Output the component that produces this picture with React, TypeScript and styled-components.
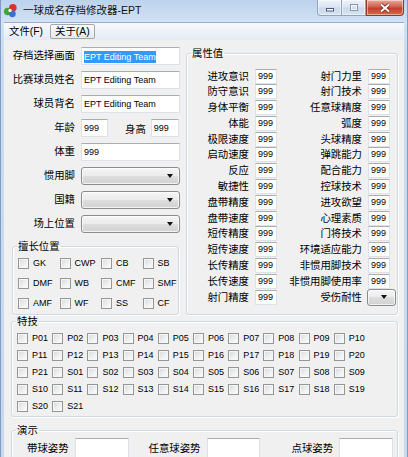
import React from "react"
import styled, { createGlobalStyle } from "styled-components"

const GlobalStyle = createGlobalStyle`
  *, *::before, *::after { box-sizing: border-box; }
  html, body { margin: 0; padding: 0; }
  body {
    width: 408px;
    height: 457px;
    overflow: hidden;
    font-family: "Liberation Sans", "Noto Sans CJK SC", sans-serif;
    color: #000;
  }
`

const Window = styled.div`
  width: 408px;
  height: 457px;
  display: flex;
  flex-direction: column;
  background: linear-gradient(#bcd2ec, #d3e2f4 22px, #c9dbf0 60px, #c6d9ef);
  border-left: 1px solid #7f9cc4;
  border-right: 1px solid #7f9cc4;
  overflow: hidden;
`

const TitleBar = styled.div`
  height: 22px;
  flex: none;
  display: flex;
  align-items: flex-start;
  padding-left: 2px;
`

const AppIcon = styled.svg`
  width: 15px;
  height: 15px;
  margin-top: 3px;
  flex: none;
`

const Title = styled.div`
  margin-left: 5px;
  font-size: 10.5px;
  line-height: 20px;
  color: #111;
  flex: 1;
`

const CaptionButtons = styled.div`
  display: flex;
  margin-right: 3px;
`

const CaptionButton = styled.div<{ $w: number; $close?: boolean; $first?: boolean }>`
  width: ${(p) => p.$w}px;
  height: 16px;
  display: flex;
  align-items: center;
  justify-content: center;
  border: 1px solid ${(p) => (p.$close ? "#8a3a30" : "#8ea4c2")};
  border-top: none;
  border-left: ${(p) => (p.$close || p.$first ? "" : "none")};
  border-radius: ${(p) => (p.$first ? "0 0 0 4px" : p.$close ? "0 0 4px 0" : "0")};
  background: ${(p) =>
    p.$close
      ? "linear-gradient(#e9a99b, #d0604d 45%, #c0402c 55%, #d66a4e)"
      : "linear-gradient(#eef3fa, #dbe5f1 45%, #cbd9ea 55%, #d8e4f2)"};
  box-shadow: inset 0 0 0 1px rgba(255, 255, 255, 0.45);
`

const Frame = styled.div`
  flex: 1;
  display: flex;
  flex-direction: column;
  padding: 0 3px;
  min-height: 0;
`

const MenuBar = styled.div`
  height: 18px;
  flex: none;
  display: flex;
  align-items: center;
  gap: 2px;
  padding-left: 0;
  border-top: 1px solid #97aecd;
  background: linear-gradient(#f7f9fd, #e4ebf5);
`

const MenuItem = styled.div<{ $hot?: boolean }>`
  height: 15px;
  padding: 0 4px;
  font-size: 10.4px;
  line-height: 13px;
  border: 1px solid ${(p) => (p.$hot ? "#a3a7ad" : "transparent")};
  border-radius: 2px;
  background: ${(p) => (p.$hot ? "linear-gradient(#fbfbfb, #e6e8eb)" : "transparent")};
`

const Client = styled.div`
  flex: 1;
  background: #f0f0f0;
  padding: 7px 6px 0 7px;
`

const TopSection = styled.div`
  display: flex;
  gap: 6px;
  height: 268px;
`

const LeftColumn = styled.div`
  width: 169px;
  display: flex;
  flex-direction: column;
`

const Form = styled.div`
  display: grid;
  grid-template-columns: 64px 99px;
  grid-auto-rows: 18px;
  column-gap: 6px;
  row-gap: 6px;
`

const Label = styled.div`
  font-size: 10.4px;
  line-height: 18px;
  text-align: right;
  white-space: nowrap;
`

const TextBox = styled.div<{ $w?: number; $h?: number }>`
  width: ${(p) => (p.$w ? `${p.$w}px` : "100%")};
  height: ${(p) => p.$h ?? 18}px;
  background: #fff;
  border: 1px solid #dde2e8;
  border-top-color: #abadb3;
  font-size: 9px;
  line-height: ${(p) => (p.$h ?? 18) - 2}px;
  padding-left: 2px;
  white-space: nowrap;
  overflow: hidden;
  flex: none;
`

const Selected = styled.span`
  display: inline-block;
  line-height: 12px;
  background: #3399ff;
  color: #fff;
  vertical-align: middle;
`

const InlineRow = styled.div`
  display: flex;
  align-items: center;
`

const InlineLabel = styled.span`
  font-size: 10.4px;
  margin: 0 5px 0 17px;
`

const Combo = styled.div<{ $w?: number; $h?: number }>`
  width: ${(p) => (p.$w ? `${p.$w}px` : "100%")};
  height: ${(p) => p.$h ?? 18}px;
  border: 1px solid #8c8c8c;
  border-radius: 3px;
  background: linear-gradient(#f5f5f5, #ebebeb 50%, #dddddd 50%, #d2d2d2);
  box-shadow: inset 0 0 0 1px rgba(255, 255, 255, 0.7);
  display: flex;
  align-items: center;
  justify-content: flex-end;
  padding-right: 6px;
  flex: none;

  &::after {
    content: "";
    border-left: 3px solid transparent;
    border-right: 3px solid transparent;
    border-top: 4px solid #111;
  }
`

const Group = styled.fieldset<{ $mt?: number }>`
  margin: ${(p) => p.$mt ?? 0}px 0 0 0;
  padding: 0;
  min-width: 0;
  border: 1px solid #cfd9df;
  border-radius: 3px;
  box-shadow: inset 1px 1px 0 #fff, 1px 1px 0 #fff;
`

const Legend = styled.legend`
  margin-left: 4px;
  padding: 0 1px;
  font-size: 10.4px;
  line-height: 13px;
`

const PositionGroup = styled(Group)`
  width: 167px;
  margin-left: 1px;
`

const CheckGrid = styled.div<{ $col: number; $row: number; $cols: number }>`
  display: grid;
  grid-template-columns: repeat(${(p) => p.$cols}, ${(p) => p.$col}px);
  grid-auto-rows: ${(p) => p.$row}px;
`

const PositionChecks = styled(CheckGrid)`
  padding: 0 0 1px 5px;
`

const SkillChecks = styled(CheckGrid)`
  padding: 1.5px 0 1px 5px;
`

const Check = styled.label`
  display: flex;
  align-items: center;
  gap: 4px;
  font-size: 9px;
  white-space: nowrap;
`

const Box = styled.span`
  width: 11px;
  height: 11px;
  flex: none;
  border: 1px solid #959696;
  background: linear-gradient(135deg, #d6d9dd, #f0f1f2 60%, #fcfcfc);
  box-shadow: inset 0 0 0 1px #f6f6f6;
`

const AttrGroup = styled(Group)`
  flex: 1;
`

const AttrGrid = styled.div`
  display: grid;
  grid-template-columns: 57px 22px 79px 22px;
  grid-auto-rows: 15px;
  column-gap: 6px;
  row-gap: 0.8px;
  padding: 8.5px 0 0 5px;
  align-items: center;
`

const AttrLabel = styled.div`
  font-size: 10.4px;
  line-height: 15px;
  text-align: right;
  white-space: nowrap;
`

const InjuryCombo = styled(Combo)`
  margin-left: -1px;
  padding-right: 8px;
`

const DemoRow = styled.div`
  display: flex;
  align-items: center;
  padding: 0.5px 0 0 15px;
`

const DemoLabel = styled.span<{ $ml?: number }>`
  font-size: 10.4px;
  margin: 0 6px 0 ${(p) => p.$ml ?? 0}px;
  white-space: nowrap;
`

const positions = ["GK", "CWP", "CB", "SB", "DMF", "WB", "CMF", "SMF", "AMF", "WF", "SS", "CF"]

const pad = (n: number) => (n < 10 ? "0" + n : "" + n)
const skills = [
  ...Array.from({ length: 21 }, (_, i) => "P" + pad(i + 1)),
  ...Array.from({ length: 21 }, (_, i) => "S" + pad(i + 1)),
]

const attrs: [string, string][] = [
  ["进攻意识", "射门力里"],
  ["防守意识", "射门技术"],
  ["身体平衡", "任意球精度"],
  ["体能", "弧度"],
  ["极限速度", "头球精度"],
  ["启动速度", "弹跳能力"],
  ["反应", "配合能力"],
  ["敏捷性", "控球技术"],
  ["盘带精度", "进攻欲望"],
  ["盘带速度", "心理素质"],
  ["短传精度", "门将技术"],
  ["短传速度", "环境适应能力"],
  ["长传精度", "非惯用脚技术"],
  ["长传速度", "非惯用脚使用率"],
  ["射门精度", "受伤耐性"],
]

const CheckItem = ({ text }: { text: string }) => (
  <Check>
    <Box />
    {text}
  </Check>
)

export default function App() {
  return (
    <>
      <GlobalStyle />
      <Window>
        <TitleBar>
          <AppIcon viewBox="0 0 16 16">
            <circle cx="5" cy="9" r="4" fill="#3fa53a" />
            <circle cx="10.5" cy="5" r="4" fill="#d8332c" />
            <circle cx="10" cy="11.5" r="3.6" fill="#3a6fd0" />
            <circle cx="7.5" cy="8" r="1.8" fill="#f2f2f2" />
          </AppIcon>
          <Title>一球成名存档修改器-EPT</Title>
          <CaptionButtons>
            <CaptionButton $w={25} $first>
              <svg width="10" height="8" viewBox="0 0 10 8">
                <rect x="1.5" y="4.5" width="7" height="2.5" fill="#fff" stroke="#4a5d78" />
              </svg>
            </CaptionButton>
            <CaptionButton $w={24}>
              <svg width="10" height="9" viewBox="0 0 10 9">
                <rect x="1.5" y="1.5" width="7" height="6" fill="none" stroke="#8596ad" strokeWidth="1" />
                <rect x="2.5" y="2.5" width="5" height="4" fill="none" stroke="#f5f8fc" strokeWidth="1" />
              </svg>
            </CaptionButton>
            <CaptionButton $w={38} $close>
              <svg width="12" height="10" viewBox="0 0 12 10">
                <path d="M2 1.5 L10 8.5 M10 1.5 L2 8.5" stroke="#5a2019" strokeWidth="3.4" />
                <path d="M2 1.5 L10 8.5 M10 1.5 L2 8.5" stroke="#fff" strokeWidth="2" />
              </svg>
            </CaptionButton>
          </CaptionButtons>
        </TitleBar>
        <Frame>
          <MenuBar>
            <MenuItem>文件(F)</MenuItem>
            <MenuItem $hot>关于(A)</MenuItem>
          </MenuBar>
          <Client>
            <TopSection>
              <LeftColumn>
                <Form>
                  <Label>存档选择画面</Label>
                  <TextBox>
                    <Selected>EPT Editing Team</Selected>
                  </TextBox>
                  <Label>比赛球员姓名</Label>
                  <TextBox>EPT Editing Team</TextBox>
                  <Label>球员背名</Label>
                  <TextBox>EPT Editing Team</TextBox>
                  <Label>年龄</Label>
                  <InlineRow>
                    <TextBox $w={27}>999</TextBox>
                    <InlineLabel>身高</InlineLabel>
                    <TextBox $w={28}>999</TextBox>
                  </InlineRow>
                  <Label>体重</Label>
                  <TextBox>999</TextBox>
                  <Label>惯用脚</Label>
                  <Combo />
                  <Label>国籍</Label>
                  <Combo />
                  <Label>场上位置</Label>
                  <Combo />
                </Form>
                <PositionGroup $mt={7}>
                  <Legend>擅长位置</Legend>
                  <PositionChecks $cols={4} $col={41.5} $row={20}>
                    {positions.map((p) => (
                      <CheckItem key={p} text={p} />
                    ))}
                  </PositionChecks>
                </PositionGroup>
              </LeftColumn>
              <AttrGroup>
                <Legend>属性值</Legend>
                <AttrGrid>
                  {attrs.map(([a, b], i) => (
                    <React.Fragment key={a}>
                      <AttrLabel>{a}</AttrLabel>
                      <TextBox $h={15}>999</TextBox>
                      <AttrLabel>{b}</AttrLabel>
                      {i === attrs.length - 1 ? (
                        <InjuryCombo $w={29} $h={17} />
                      ) : (
                        <TextBox $h={15}>999</TextBox>
                      )}
                    </React.Fragment>
                  ))}
                </AttrGrid>
              </AttrGroup>
            </TopSection>
            <Group>
              <Legend>特技</Legend>
              <SkillChecks $cols={10} $col={35.2} $row={17}>
                {skills.map((s) => (
                  <CheckItem key={s} text={s} />
                ))}
              </SkillChecks>
            </Group>
            <Group $mt={7.5}>
              <Legend>演示</Legend>
              <DemoRow>
                <DemoLabel>带球姿势</DemoLabel>
                <TextBox $w={54} $h={20} />
                <DemoLabel $ml={20}>任意球姿势</DemoLabel>
                <TextBox $w={53} $h={20} />
                <DemoLabel $ml={32}>点球姿势</DemoLabel>
                <TextBox $w={54} $h={20} />
              </DemoRow>
            </Group>
          </Client>
        </Frame>
      </Window>
    </>
  )
}
